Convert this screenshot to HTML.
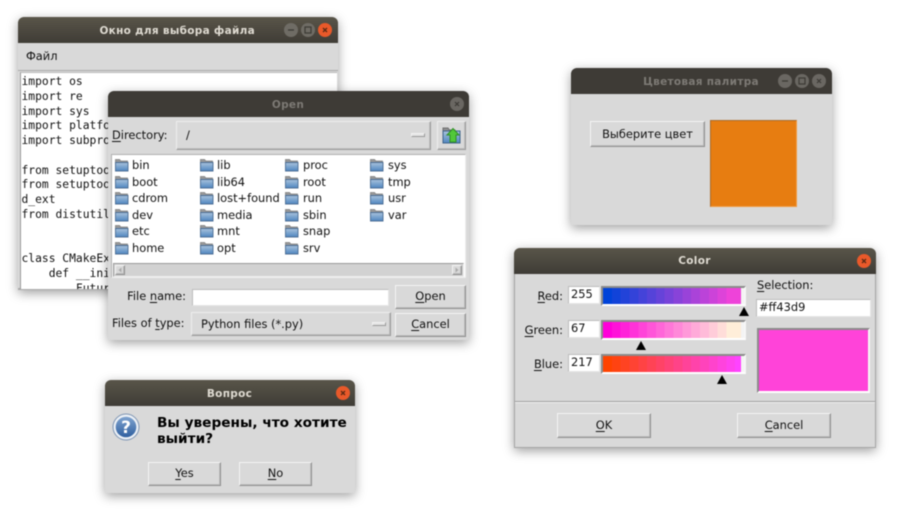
<!DOCTYPE html>
<html><head><meta charset="utf-8">
<style>
html,body{margin:0;padding:0;background:#fff;width:900px;height:522px;overflow:hidden}
body{position:relative;font-family:"DejaVu Sans",sans-serif;font-size:11.4px;color:#111;filter:blur(.42px)}
.win{position:absolute;background:#d9d9d9;border-radius:6px 6px 0 0;box-shadow:0 3px 11px rgba(0,0,0,.38)}
.tb{position:absolute;left:0;right:0;top:0;border-radius:6px 6px 0 0;background:linear-gradient(#595549,#3f3c36);color:#dfdbd2;font-weight:bold;font-size:10.5px;text-align:center;letter-spacing:.3px}
.tb.in{background:#3e3b36;color:#7d7a75}
.a,.btn,.ent{position:absolute;white-space:nowrap}
.a{line-height:16px}
.btn{box-sizing:border-box;background:#d9d9d9;border:1px solid;border-color:#f4f4f4 #8f8f8f #8f8f8f #f4f4f4;box-shadow:inset -1px -1px 0 #bdbdbd;text-align:center}
.ent{box-sizing:border-box;background:#fff;border:1px solid;border-color:#bcbcbc #e6e6e6 #e6e6e6 #bcbcbc;padding-left:2px}
.c{position:absolute;width:14px;height:14px;border-radius:50%}
.bar{position:absolute;box-sizing:border-box;border:2px solid;border-color:#8b8b8b #f7f7f7 #fff #8b8b8b;width:145px;height:20px}
.tri{position:absolute;width:0;height:0;border-left:5px solid transparent;border-right:5px solid transparent;border-bottom:9px solid #000}
.pad{position:absolute;width:14px;height:4px;background:#e4e4e4;border:1px solid;border-color:#f2f2f2 #9a9a9a #9a9a9a #f2f2f2;box-sizing:border-box}
u{text-decoration-thickness:1px;text-underline-offset:2px}
svg{position:absolute;overflow:visible}
pre{margin:0;font:11.3px/14.75px "DejaVu Sans Mono",monospace;color:#111;position:absolute;left:1px;top:2px}
</style></head><body>

<svg width="0" height="0" style="left:0;top:0"><defs>
<linearGradient id="fb" x1="0" y1="0" x2="0" y2="1"><stop offset="0" stop-color="#a9c3dd"/><stop offset="1" stop-color="#4f86c0"/></linearGradient>
<symbol id="f" viewBox="0 0 14 14" overflow="visible">
<path d="M.5 1.5h4l1.3 1.5H12.5v3H.5z" fill="#9a9a9a" stroke="#7d7d7d" stroke-width=".8"/>
<path d="M.5 4.5h12.5v8.5H.5z" fill="url(#fb)" stroke="#4b6d94" stroke-width=".9"/>
</symbol></defs></svg>

<!-- File window -->
<div class="win" style="left:18px;top:17px;width:319.500px;height:273px;border-bottom:2px solid #aaa;box-sizing:border-box">
 <div class="tb" style="height:26px;line-height:28px;padding-right:1px">Окно для выбора файла</div>
 <div class="c" style="left:266px;top:6px;background:#6f6c65"><svg width="14" height="14"><path d="M4 7h6" stroke="#3c3a35" stroke-width="1.3"/></svg></div>
 <div class="c" style="left:283px;top:6px;background:#6f6c65"><svg width="14" height="14"><rect x="4" y="4" width="6" height="6" fill="none" stroke="#3c3a35" stroke-width="1.2"/></svg></div>
 <div class="c" style="left:300px;top:6px;background:#e9592a"><svg width="14" height="14"><path d="M5 5l4 4M9 5l-4 4" stroke="#5c2a14" stroke-width="1.3"/></svg></div>
 <div class="a" style="left:8px;top:31px">Файл</div>
 <div style="position:absolute;left:0;top:53px;width:100%;height:1px;background:#a9a9a9"></div>
 <div style="position:absolute;left:1.5px;right:1px;top:55px;height:216px;background:#fff;border-left:1px solid #999;border-top:1px solid #bbb;overflow:hidden">
<pre>import os
import re
import sys
import platform
import subprocess

from setuptools
from setuptools
d_ext
from distutils


class CMakeExt
    def __init
        Future</pre>
 </div>
</div>

<!-- Open -->
<div class="win" style="left:108px;top:91px;width:361px;height:249px">
 <div class="tb in" style="height:26px;line-height:28px;padding-right:1px">Open</div>
 <div class="c" style="left:342px;top:6px;background:#6a6762"><svg width="14" height="14"><path d="M5 5l4 4M9 5l-4 4" stroke="#3c3a35" stroke-width="1.2"/></svg></div>
 <div class="a" style="left:4px;top:36px"><u>D</u>irectory:</div>
 <div class="btn" style="left:68px;top:30px;width:255px;height:29px;text-align:left;line-height:26px;padding-left:9px;border-color:#eee #9a9a9a #9a9a9a #eee">/</div>
 <div class="pad" style="left:303px;top:42px"></div>
 <div class="btn" style="left:329px;top:30px;width:29px;height:29px;border-color:#eee #9a9a9a #9a9a9a #eee">
  <svg width="19" height="19" style="left:4px;top:4px"><path d="M1 2h5l1.5 2H13v4H1z" fill="#8f8f8f" stroke="#6f6f6f"/><path d="M1 5h17v12H1z" fill="url(#fb)" stroke="#3f638c"/><path d="M11 2.500l6 6.500h-3v7h-6v-7h-3z" fill="#52c83a" stroke="#2f8f26"/></svg>
 </div>
 <div style="position:absolute;left:3px;top:63px;width:355px;height:124px;box-sizing:border-box;background:#fff;border:1px solid;border-color:#b0b0b0 #eee #eee #b0b0b0"></div>
 <svg width="14" height="14" style="left:7px;top:67px"><use href="#f"/></svg><svg width="14" height="14" style="left:7px;top:84px"><use href="#f"/></svg><svg width="14" height="14" style="left:7px;top:100px"><use href="#f"/></svg><svg width="14" height="14" style="left:7px;top:117px"><use href="#f"/></svg><svg width="14" height="14" style="left:7px;top:133px"><use href="#f"/></svg><svg width="14" height="14" style="left:7px;top:150px"><use href="#f"/></svg>
 <svg width="14" height="14" style="left:92px;top:67px"><use href="#f"/></svg><svg width="14" height="14" style="left:92px;top:84px"><use href="#f"/></svg><svg width="14" height="14" style="left:92px;top:100px"><use href="#f"/></svg><svg width="14" height="14" style="left:92px;top:117px"><use href="#f"/></svg><svg width="14" height="14" style="left:92px;top:133px"><use href="#f"/></svg><svg width="14" height="14" style="left:92px;top:150px"><use href="#f"/></svg>
 <svg width="14" height="14" style="left:177px;top:67px"><use href="#f"/></svg><svg width="14" height="14" style="left:177px;top:84px"><use href="#f"/></svg><svg width="14" height="14" style="left:177px;top:100px"><use href="#f"/></svg><svg width="14" height="14" style="left:177px;top:117px"><use href="#f"/></svg><svg width="14" height="14" style="left:177px;top:133px"><use href="#f"/></svg><svg width="14" height="14" style="left:177px;top:150px"><use href="#f"/></svg>
 <svg width="14" height="14" style="left:262px;top:67px"><use href="#f"/></svg><svg width="14" height="14" style="left:262px;top:84px"><use href="#f"/></svg><svg width="14" height="14" style="left:262px;top:100px"><use href="#f"/></svg><svg width="14" height="14" style="left:262px;top:117px"><use href="#f"/></svg>
 <div class="a" style="left:24px;top:66px">bin</div><div class="a" style="left:24px;top:83px">boot</div><div class="a" style="left:24px;top:99px">cdrom</div><div class="a" style="left:24px;top:116px">dev</div><div class="a" style="left:24px;top:132px">etc</div><div class="a" style="left:24px;top:149px">home</div>
 <div class="a" style="left:109px;top:66px">lib</div><div class="a" style="left:109px;top:83px">lib64</div><div class="a" style="left:109px;top:99px">lost+found</div><div class="a" style="left:109px;top:116px">media</div><div class="a" style="left:109px;top:132px">mnt</div><div class="a" style="left:109px;top:149px">opt</div>
 <div class="a" style="left:195px;top:66px">proc</div><div class="a" style="left:195px;top:83px">root</div><div class="a" style="left:195px;top:99px">run</div><div class="a" style="left:195px;top:116px">sbin</div><div class="a" style="left:195px;top:132px">snap</div><div class="a" style="left:195px;top:149px">srv</div>
 <div class="a" style="left:280px;top:66px">sys</div><div class="a" style="left:280px;top:83px">tmp</div><div class="a" style="left:280px;top:99px">usr</div><div class="a" style="left:280px;top:116px">var</div>
 <div style="position:absolute;left:5px;top:172px;width:351px;height:14px;box-sizing:border-box;background:#d2d2d2;border:1px solid;border-color:#999 #eee #eee #999"></div>
 <div class="btn" style="left:7px;top:174px;width:10px;height:10px"></div>
 <div class="btn" style="left:344px;top:174px;width:10px;height:10px"></div>
 <svg width="10" height="10" style="left:7px;top:174px"><path d="M6.500 2.500l-3 2.500 3 2.500z" fill="#aaa"/></svg>
 <svg width="10" height="10" style="left:344px;top:174px"><path d="M3.500 2.500l3 2.500-3 2.500z" fill="#aaa"/></svg>
 <div class="a" style="right:283px;top:197px">File <u>n</u>ame:</div>
 <div class="ent" style="left:84px;top:198px;width:197px;height:17px"></div>
 <div class="btn" style="left:287px;top:194px;width:71px;height:24px;line-height:20px"><u>O</u>pen</div>
 <div class="a" style="left:4px;top:224px">Files of <u>t</u>ype:</div>
 <div class="btn" style="left:83px;top:221px;width:200px;height:24px;line-height:22px;text-align:left;padding-left:9px;border-color:#eee #9a9a9a #9a9a9a #eee">Python files (*.py)</div>
 <div class="pad" style="left:264px;top:231px"></div>
 <div class="btn" style="left:287px;top:222px;width:71px;height:24px;line-height:20px"><u>C</u>ancel</div>
</div>

<!-- Question -->
<div class="win" style="left:105px;top:380px;width:250px;height:113px">
 <div class="tb" style="height:26px;line-height:28px;padding-right:1px">Вопрос</div>
 <div class="c" style="left:231px;top:6px;background:#e9592a"><svg width="14" height="14"><path d="M5 5l4 4M9 5l-4 4" stroke="#5c2a14" stroke-width="1.3"/></svg></div>
 <svg width="28" height="28" style="left:7px;top:33px"><defs><linearGradient id="q" x1="0" y1="0" x2="0" y2="1"><stop offset="0" stop-color="#7fa3cf"/><stop offset="1" stop-color="#2f5f9f"/></linearGradient></defs><circle cx="14" cy="14" r="13" fill="#edf1f6" stroke="#7e95b3"/><circle cx="14" cy="14" r="10.300" fill="url(#q)"/><text x="14" y="20" text-anchor="middle" font-family="DejaVu Sans,sans-serif" font-weight="bold" font-size="17" fill="#fff">?</text></svg>
 <div class="a" style="left:52px;top:35px;font-weight:bold;font-size:13.700px;color:#000">Вы уверены, что хотите<br>выйти?</div>
 <div class="btn" style="left:43px;top:82px;width:73px;height:24px;line-height:21px"><u>Y</u>es</div>
 <div class="btn" style="left:134px;top:82px;width:73px;height:24px;line-height:21px"><u>N</u>o</div>
</div>

<!-- Palette -->
<div class="win" style="left:571px;top:68px;width:261px;height:157px">
 <div class="tb in" style="height:26px;line-height:28px;padding-right:1px">Цветовая палитра</div>
 <div class="c" style="left:207px;top:6px;background:#6a6762"><svg width="14" height="14"><path d="M4 7h6" stroke="#3c3a35" stroke-width="1.3"/></svg></div>
 <div class="c" style="left:224px;top:6px;background:#6a6762"><svg width="14" height="14"><rect x="4" y="4" width="6" height="6" fill="none" stroke="#3c3a35" stroke-width="1.2"/></svg></div>
 <div class="c" style="left:241px;top:6px;background:#6a6762"><svg width="14" height="14"><path d="M5 5l4 4M9 5l-4 4" stroke="#3c3a35" stroke-width="1.2"/></svg></div>
 <div class="btn" style="left:19px;top:53px;width:115px;height:26px;line-height:24px">Выберите цвет</div>
 <div style="position:absolute;left:139px;top:52px;width:87px;height:87px;box-sizing:border-box;background:#e77d11;border:1px solid;border-color:#a86a2c #f09a42 #f09a42 #a86a2c"></div>
</div>

<!-- Color -->
<div class="win" style="left:514px;top:248px;width:362px;height:200px;border:1px solid #a5a5a5;border-top:0;box-sizing:border-box">
 <div class="tb" style="left:-1px;right:-1px;height:26px;line-height:26px;padding-right:1px">Color</div>
 <div class="c" style="left:342px;top:6px;background:#e9592a"><svg width="14" height="14"><path d="M5 5l4 4M9 5l-4 4" stroke="#5c2a14" stroke-width="1.3"/></svg></div>
</div>
<div class="a" style="right:337px;top:288px"><u>R</u>ed:</div>
<div class="a" style="right:337px;top:322px"><u>G</u>reen:</div>
<div class="a" style="right:337px;top:356px"><u>B</u>lue:</div>
<div class="ent" style="left:568px;top:286px;width:32px;height:18px;line-height:15px">255</div>
<div class="ent" style="left:568px;top:320px;width:32px;height:18px;line-height:15px">67</div>
<div class="ent" style="left:568px;top:354px;width:32px;height:18px;line-height:15px">217</div>
<div class="bar" style="left:601px;top:286px;background:linear-gradient(90deg,#0043d9 0 6.25%,#1143d9 0 12.5%,#2243d9 0 18.75%,#3343d9 0 25%,#4443d9 0 31.25%,#5543d9 0 37.5%,#6643d9 0 43.75%,#7743d9 0 50%,#8843d9 0 56.25%,#9943d9 0 62.5%,#aa43d9 0 68.75%,#bb43d9 0 75%,#cc43d9 0 81.25%,#dd43d9 0 87.5%,#ee43d9 0 98%,#f4f4f4 0)"></div>
<div class="bar" style="left:601px;top:320px;background:linear-gradient(90deg,#ff00d9 0 6.25%,#ff11d9 0 12.5%,#ff22d9 0 18.75%,#ff33d9 0 25%,#ff44d9 0 31.25%,#ff55d9 0 37.5%,#ff66d9 0 43.75%,#ff77d9 0 50%,#ff88d9 0 56.25%,#ff99d9 0 62.5%,#ffaad9 0 68.75%,#ffbbd9 0 75%,#ffccd9 0 81.25%,#ffddd9 0 87.5%,#ffeed9 0 98%,#f4f4f4 0)"></div>
<div class="bar" style="left:601px;top:354px;background:linear-gradient(90deg,#ff4300 0 6.25%,#ff4311 0 12.5%,#ff4322 0 18.75%,#ff4333 0 25%,#ff4344 0 31.25%,#ff4355 0 37.5%,#ff4366 0 43.75%,#ff4377 0 50%,#ff4388 0 56.25%,#ff4399 0 62.5%,#ff43aa 0 68.75%,#ff43bb 0 75%,#ff43cc 0 81.25%,#ff43dd 0 87.5%,#ff43ee 0 93.75%,#ff43ff 0 98%,#f4f4f4 0)"></div>
<div class="tri" style="left:739px;top:307px"></div>
<div class="tri" style="left:636px;top:341px"></div>
<div class="tri" style="left:717px;top:375px"></div>
<div class="a" style="left:757px;top:277px"><u>S</u>election:</div>
<div class="ent" style="left:756px;top:299px;width:115px;height:18px;line-height:15px">#ff43d9</div>
<div style="position:absolute;left:757px;top:328px;width:113px;height:65px;box-sizing:border-box;background:#ff43d9;border:2px solid;border-color:#8b8b8b #f7f7f7 #fff #8b8b8b"></div>
<div style="position:absolute;left:515px;top:401px;width:360px;height:1px;background:#a0a0a0;border-bottom:1px solid #f0f0f0"></div>
<div class="btn" style="left:557px;top:413px;width:94px;height:25px;line-height:23px"><u>O</u>K</div>
<div class="btn" style="left:737px;top:413px;width:94px;height:25px;line-height:23px"><u>C</u>ancel</div>

</body></html>
